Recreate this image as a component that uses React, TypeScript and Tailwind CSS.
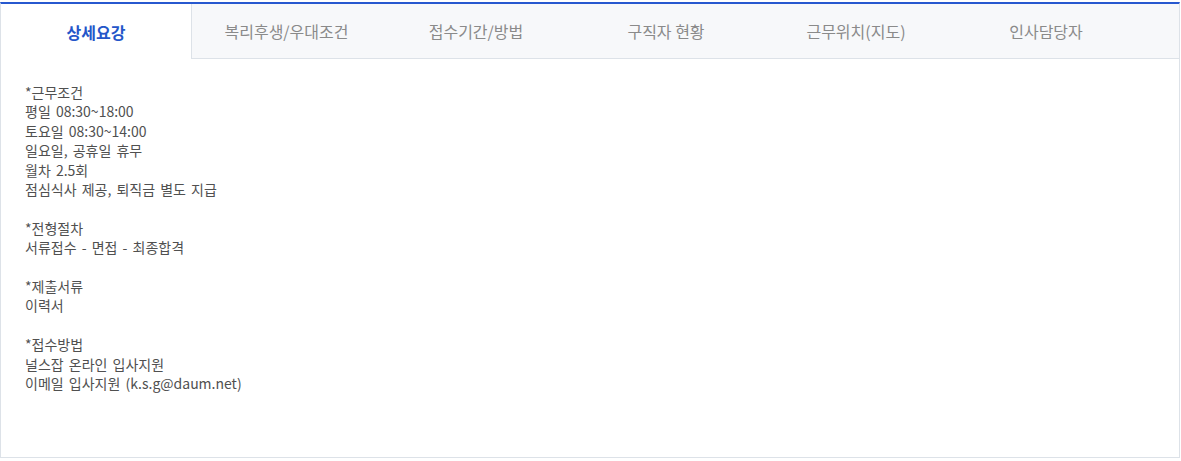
import React from 'react';

const tabs = ['상세요강', '복리후생/우대조건', '접수기간/방법', '구직자 현황', '근무위치(지도)', '인사담당자'];

const sections: string[][] = [
  ['*근무조건', '평일 08:30~18:00', '토요일 08:30~14:00', '일요일, 공휴일 휴무', '월차 2.5회', '점심식사 제공, 퇴직금 별도 지급'],
  ['*전형절차', '서류접수 - 면접 - 최종합격'],
  ['*제출서류', '이력서'],
  ['*접수방법', '널스잡 온라인 입사지원', '이메일 입사지원 (k.s.g@daum.net)'],
];

const App: React.FC = () => {
  return (
    <div className="bg-white pt-[2px]" style={{ fontFamily: '"Noto Sans CJK KR", "Noto Sans", sans-serif' }}>
      <div className="w-[1180px] h-[456px] border-x border-b border-[#dde2e8] border-t-2 border-t-[#2758cf]">
        <div className="flex h-[55px] bg-[#f7f8fa] border-b border-[#dde2e8]">
          {tabs.map((tab, i) => (
            <div
              key={i}
              className={
                i === 0
                  ? 'w-[190px] flex items-center justify-center bg-white text-[16px] font-bold text-[#2456c9] -mb-px'
                  : 'w-[190px] flex items-center justify-center text-[16px] text-[#8a8a8a] ' + (i === 1 ? 'border-l border-[#dde2e8]' : '')
              }
            >
              {tab}
            </div>
          ))}
        </div>
        <div className="pl-[24px] pt-[24px] text-[14px] leading-[19.4px] text-[#505050] [word-spacing:2px]">
          {sections.map((lines, i) => (
            <div key={i} className={i > 0 ? 'mt-[19.4px]' : ''}>
              {lines.map((line, j) => (
                <div key={j}>{line}</div>
              ))}
            </div>
          ))}
        </div>
      </div>
    </div>
  );
};

export default App;
